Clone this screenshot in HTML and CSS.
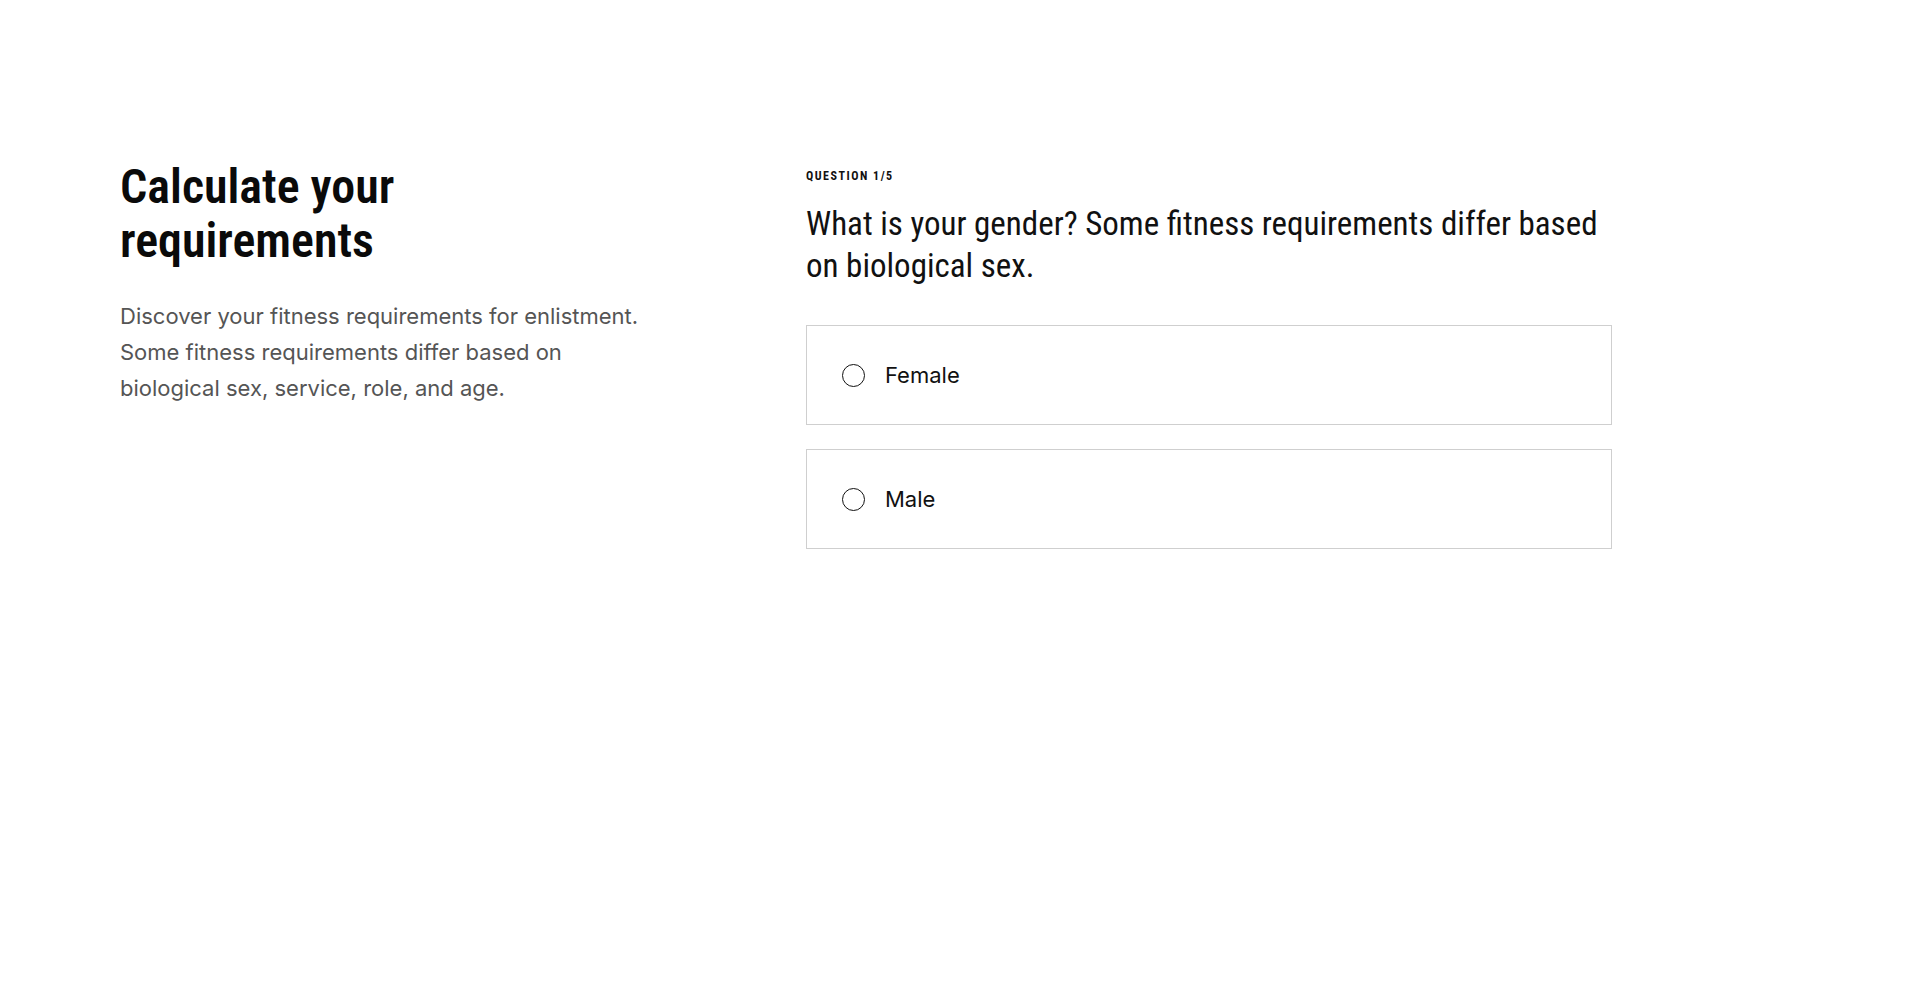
FILE: index.html
```html
<!DOCTYPE html>
<html lang="en">
<head>
<meta charset="utf-8">
<title>Calculate your requirements</title>
<link rel="stylesheet" href="styles.css">
</head>
<body>
<main class="page">
  <section class="intro">
    <h1 class="title">Calculate your requirements</h1>
    <p class="lead">Discover your fitness requirements for enlistment. Some fitness requirements differ based on biological sex, service, role, and age.</p>
  </section>
  <section class="quiz">
    <div class="step">QUESTION 1/5</div>
    <h2 class="question">What is your gender? Some fitness requirements differ based on biological sex.</h2>
    <div class="options">
      <label class="option">
        <span class="radio"></span>
        <span class="option-label">Female</span>
      </label>
      <label class="option">
        <span class="radio"></span>
        <span class="option-label">Male</span>
      </label>
    </div>
  </section>
</main>
</body>
</html>
```

FILE: styles.css
```css
* { box-sizing: border-box; }
html, body { margin: 0; padding: 0; background: #fff; }
body { font-family: "Inter", "Liberation Sans", sans-serif; color: #111; }

.page {
  display: grid;
  grid-template-columns: 686px 806px;
  padding: 160px 0 0 120px;
}

.title {
  margin: 0;
  font-family: "Roboto Condensed", "DejaVu Sans Condensed", sans-serif;
  font-weight: 600;
  font-size: 48px;
  line-height: 54px;
  color: #0a0a0a;
  max-width: 330px;
}

.lead {
  margin: 30px 0 0;
  max-width: 530px;
  font-size: 22px;
  line-height: 36px;
  color: #555;
}

.quiz { padding-top: 8px; }

.step {
  font-family: "Roboto Condensed", "DejaVu Sans Condensed", sans-serif;
  font-weight: 700;
  font-size: 12px;
  letter-spacing: 1.5px;
  line-height: 16px;
  color: #111;
}

.question {
  margin: 19px 0 0;
  font-family: "Roboto Condensed", "DejaVu Sans Condensed", sans-serif;
  font-weight: 400;
  font-size: 33px;
  line-height: 42px;
  color: #111;
}

.options {
  margin-top: 38px;
  display: flex;
  flex-direction: column;
  gap: 24px;
}

.option {
  display: flex;
  align-items: center;
  gap: 20px;
  height: 100px;
  padding: 0 35px;
  border: 1px solid #cfcfcf;
  cursor: pointer;
}

.radio {
  width: 23px;
  height: 23px;
  border: 1.5px solid #111;
  border-radius: 50%;
  flex: none;
}

.option-label {
  font-size: 22px;
  color: #111;
}
```
